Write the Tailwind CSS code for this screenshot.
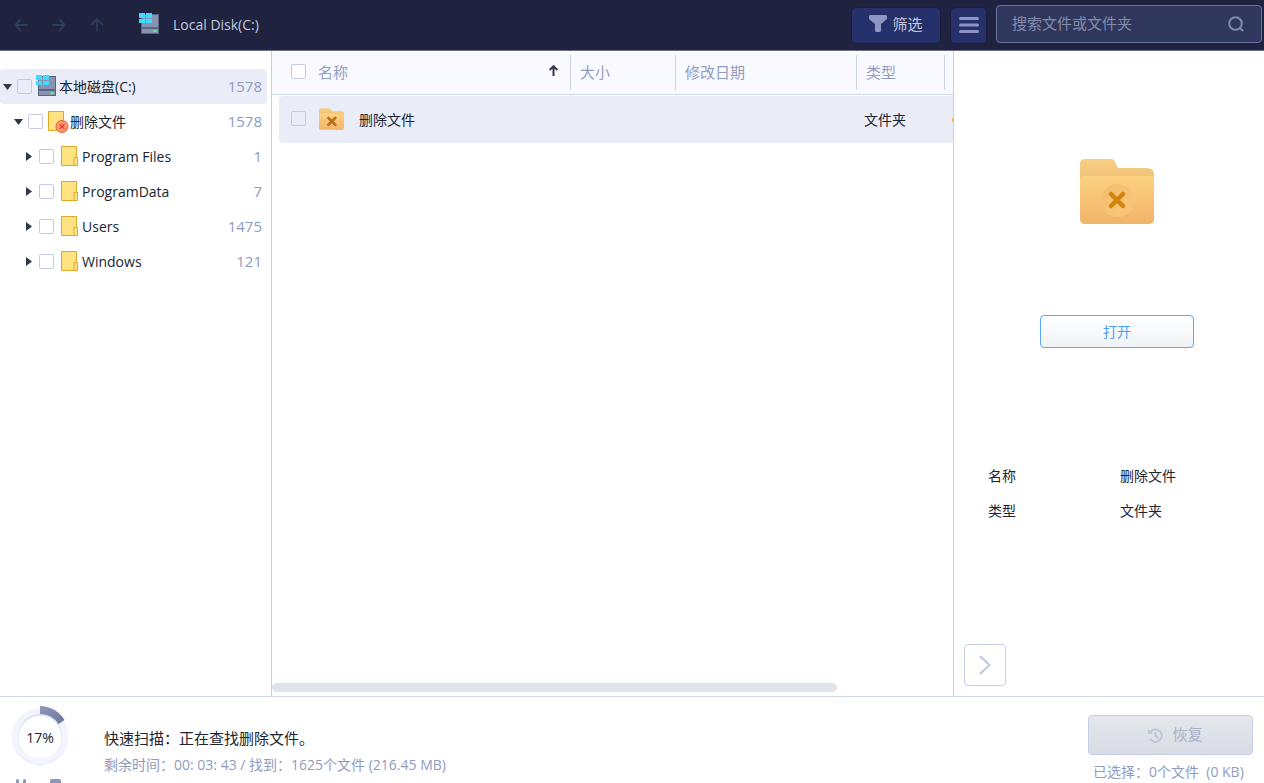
<!DOCTYPE html>
<html lang="zh-CN">
<head>
<meta charset="utf-8">
<title>Local Disk(C:)</title>
<meta name="viewport" content="width=device-width, initial-scale=1">
<script src="https://cdn.jsdelivr.net/npm/@tailwindcss/browser@4"></script>
</head>
<body class="flex h-screen flex-col overflow-hidden bg-white font-['Open_Sans','Noto_Sans_CJK_SC',sans-serif] text-sm text-[#20242f]">

<svg class="size-0 shrink-0" aria-hidden="true">
  <defs>
    <linearGradient id="back" x1="0" y1="0" x2="0" y2="1"><stop offset="0" stop-color="#f8cf85"/><stop offset="1" stop-color="#e9b66b"/></linearGradient>
    <linearGradient id="front" x1="0" y1="0" x2="0" y2="1"><stop offset="0" stop-color="#fdd182"/><stop offset="1" stop-color="#f1b36b"/></linearGradient>
    <linearGradient id="disc" x1="0" y1="0" x2="1" y2="1"><stop offset="0" stop-color="#f3bd6f"/><stop offset="1" stop-color="#fac77d"/></linearGradient>
    <linearGradient id="arc" x1="0" y1="0" x2="1" y2="1"><stop offset="0" stop-color="#8d9abd"/><stop offset="1" stop-color="#6b7794"/></linearGradient>
  </defs>
  <symbol id="disk" viewBox="0 0 21 22">
    <rect x="2.5" y="1.5" width="17" height="19" fill="#8893b3" stroke="#59647e"/>
    <path d="M3 15h16" stroke="#414b66" stroke-width="1.2"/>
    <rect x="14.5" y="17" width="3" height="2" fill="#4df58b"/>
    <path d="M0 0h6v5H0zM7 0h6v5H7zM0 6h6v4H0zM7 6h6v4H7z" fill="#3fd8ff"/>
  </symbol>
  <symbol id="folder" viewBox="0 0 17 20">
    <path d="M.5.5h15v11h1v8H.5z" fill="#ffe383"/>
    <path d="M15.500 11.500V.5H.5v19h13m2-8h-2.500v8h3.500v-8z" fill="none" stroke="#dda92b"/>
  </symbol>
</svg>

<header class="flex h-[51px] shrink-0 items-center border-b border-[#6d6d83] bg-[#1f233f] text-[#c5c9dc]">
  <nav class="flex items-center gap-6 pl-[14px]" aria-label="导航">
    <button class="text-[#2c3c5e]" aria-label="后退"><svg class="block size-[14px]" viewBox="0 0 14 14" fill="none" stroke="currentColor" stroke-width="1.8"><path d="M13.5 7H1M7 1 1 7l6 6"/></svg></button>
    <button class="text-[#2c3c5e]" aria-label="前进"><svg class="block size-[14px]" viewBox="0 0 14 14" fill="none" stroke="currentColor" stroke-width="1.8"><path d="M.5 7H13M7 1l6 6-6 6"/></svg></button>
    <button class="text-[#2c3c5e]" aria-label="上一级"><svg class="block size-[14px]" viewBox="0 0 14 14" fill="none" stroke="currentColor" stroke-width="1.8"><path d="M7 13.5V1M1 7l6-6 6 6"/></svg></button>
  </nav>
  <svg class="mb-[2px] ml-[35px] h-[22px] w-[21px]"><use href="#disk"/></svg>
  <span class="ml-[13px] flex-1">Local Disk(C:)</span>
  <button class="flex h-[35px] w-[88px] items-center justify-center gap-[5px] rounded bg-[#26306a] text-[15px] shadow-[0_0_0_1px_#1a1e3b]">
    <svg class="mb-1 h-[17px] w-[18px]" viewBox="0 0 18 17" fill="#8d95c4"><path d="M1 0h16l1 1v3l-6 5v7l-1 1H7l-1-1V9L0 4V1z"/></svg>筛选
  </button>
  <button class="ml-[11px] flex h-[35px] w-[35px] items-center justify-center rounded bg-[#26306a] shadow-[0_0_0_1px_#1a1e3b]" aria-label="菜单">
    <svg class="h-4 w-5" viewBox="0 0 20 16" stroke="#8d95c4" stroke-width="3" stroke-linecap="round"><path d="M1.5 1.5h17M1.5 8h17M1.5 14.5h17"/></svg>
  </button>
  <label class="mr-[2px] mb-[2px] ml-[10px] flex h-[38px] w-[266px] items-center rounded border border-[#6974a3] bg-[#30375c] pr-[17px] pl-[15px]">
    <input type="text" aria-label="搜索文件或文件夹" placeholder="搜索文件或文件夹" class="min-w-0 flex-1 bg-transparent text-[15px] outline-none placeholder:text-[#858daf]">
    <svg class="size-4" viewBox="0 0 16 16" fill="none" stroke="#8289ad" stroke-width="2" stroke-linecap="round"><circle cx="7.500" cy="7.500" r="6.300"/><path d="m12 12 2.500 2.500"/></svg>
  </label>
</header>

<main class="flex min-h-0 flex-1">
  <aside class="w-[272px] shrink-0 border-r border-[#c6cee2] pt-[18px]">
    <ul>
      <li class="mr-[4px] flex h-[35px] items-center rounded bg-[#eaecf8] pr-[5px]">
        <label class="flex flex-1 items-center pl-[3px]">
          <svg class="h-[6px] w-[9px]" viewBox="0 0 9 6" fill="#30384b"><path d="M0 0h9L4.500 6z"/></svg>
          <input type="checkbox" class="mb-px ml-[5px] size-[15px] appearance-none rounded-xs border border-[#c3cce4]">
          <svg class="mb-[2px] ml-1 h-[22px] w-[21px]"><use href="#disk"/></svg>
          <span class="ml-[2px]">本地磁盘(C:)</span>
        </label>
        <span class="text-[15px] text-[#8f9bbf]">1578</span>
      </li>
      <li class="mr-[4px] flex h-[35px] items-center pr-[5px]">
        <label class="flex flex-1 items-center pl-[14px]">
          <svg class="h-[6px] w-[9px]" viewBox="0 0 9 6" fill="#30384b"><path d="M0 0h9L4.500 6z"/></svg>
          <input type="checkbox" class="mb-px ml-[5px] size-[15px] appearance-none rounded-xs border border-[#c3cce4] bg-white">
          <svg class="ml-[5px] h-[22px] w-[21px]" viewBox="0 0 21 22"><path d="M.5.5h15v19H.5z" fill="#ffe383" stroke="#dda92b"/><circle cx="14" cy="15.500" r="6" fill="#ff9a77" stroke="#ee5534"/><path d="m11.500 13 5 5m0-5-5 5" stroke="#e54324" stroke-width="1.300"/></svg>
          <span class="ml-px">删除文件</span>
        </label>
        <span class="text-[15px] text-[#8f9bbf]">1578</span>
      </li>
      <li class="mr-[4px] flex h-[35px] items-center pr-[5px]">
        <label class="flex flex-1 items-center pl-[26px]">
          <svg class="h-[9px] w-[6px]" viewBox="0 0 6 9" fill="#30384b"><path d="M0 0v9l6-4.500z"/></svg>
          <input type="checkbox" class="mb-px ml-[7px] size-[15px] appearance-none rounded-xs border border-[#c3cce4] bg-white">
          <svg class="mb-[2px] ml-[7px] h-5 w-[17px]"><use href="#folder"/></svg>
          <span class="ml-1">Program Files</span>
        </label>
        <span class="text-[15px] text-[#8f9bbf]">1</span>
      </li>
      <li class="mr-[4px] flex h-[35px] items-center pr-[5px]">
        <label class="flex flex-1 items-center pl-[26px]">
          <svg class="h-[9px] w-[6px]" viewBox="0 0 6 9" fill="#30384b"><path d="M0 0v9l6-4.500z"/></svg>
          <input type="checkbox" class="mb-px ml-[7px] size-[15px] appearance-none rounded-xs border border-[#c3cce4] bg-white">
          <svg class="mb-[2px] ml-[7px] h-5 w-[17px]"><use href="#folder"/></svg>
          <span class="ml-1">ProgramData</span>
        </label>
        <span class="text-[15px] text-[#8f9bbf]">7</span>
      </li>
      <li class="mr-[4px] flex h-[35px] items-center pr-[5px]">
        <label class="flex flex-1 items-center pl-[26px]">
          <svg class="h-[9px] w-[6px]" viewBox="0 0 6 9" fill="#30384b"><path d="M0 0v9l6-4.500z"/></svg>
          <input type="checkbox" class="mb-px ml-[7px] size-[15px] appearance-none rounded-xs border border-[#c3cce4] bg-white">
          <svg class="mb-[2px] ml-[7px] h-5 w-[17px]"><use href="#folder"/></svg>
          <span class="ml-1">Users</span>
        </label>
        <span class="text-[15px] text-[#8f9bbf]">1475</span>
      </li>
      <li class="mr-[4px] flex h-[35px] items-center pr-[5px]">
        <label class="flex flex-1 items-center pl-[26px]">
          <svg class="h-[9px] w-[6px]" viewBox="0 0 6 9" fill="#30384b"><path d="M0 0v9l6-4.500z"/></svg>
          <input type="checkbox" class="mb-px ml-[7px] size-[15px] appearance-none rounded-xs border border-[#c3cce4] bg-white">
          <svg class="mb-[2px] ml-[7px] h-5 w-[17px]"><use href="#folder"/></svg>
          <span class="ml-1">Windows</span>
        </label>
        <span class="text-[15px] text-[#8f9bbf]">121</span>
      </li>
    </ul>
  </aside>

  <section class="flex min-w-0 flex-1 flex-col">
    <div class="min-h-0 flex-1 overflow-hidden">
      <table class="w-full table-fixed border-separate border-spacing-0">
        <colgroup><col><col class="w-[105px]"><col class="w-[181px]"><col class="w-[88px]"><col class="w-[8px]"></colgroup>
        <thead class="text-left text-[15px] text-[#929dc0]">
          <tr>
            <th class="border-b border-[#cfd8e9] bg-[#f9faff] py-1 font-normal">
              <div class="flex h-[35px] items-center border-r border-[#cad3e8] pr-3 pl-[19px]">
                <input type="checkbox" aria-label="全选" class="mb-[3px] size-[15px] appearance-none rounded-xs border border-[#c3cce4] bg-white">
                <span class="ml-3 flex-1">名称</span>
                <svg class="mb-1 h-[11px] w-[9px]" viewBox="0 0 9 11" fill="none" stroke="#30384b" stroke-width="2"><path d="M4.500 11V1M.7 5l3.800-3.800L8.300 5"/></svg>
              </div>
            </th>
            <th class="border-b border-[#cfd8e9] bg-[#f9faff] py-1 font-normal"><div class="flex h-[35px] items-center border-r border-[#cad3e8] pl-[9px]">大小</div></th>
            <th class="border-b border-[#cfd8e9] bg-[#f9faff] py-1 font-normal"><div class="flex h-[35px] items-center border-r border-[#cad3e8] pl-[9px]">修改日期</div></th>
            <th class="border-b border-[#cfd8e9] bg-[#f9faff] py-1 font-normal"><div class="flex h-[35px] items-center border-r border-[#cad3e8] pl-[9px]">类型</div></th>
            <th class="border-b border-[#cfd8e9] bg-[#f9faff]"></th>
          </tr>
        </thead>
        <tbody>
          <tr>
            <td class="pt-px pl-[7px]">
              <label class="flex h-[47px] items-center rounded-l bg-[#eaecf8] pl-3">
                <input type="checkbox" class="mb-[2px] size-[15px] appearance-none rounded-xs border border-[#c3cce4]">
                <svg class="mb-[2px] ml-[13px] h-[22px] w-[25px]" viewBox="0 0 74 64"><path d="M0 6q0-6 6-6h24q4 0 6 5l2 4h29q7 0 7 7v20H0z" fill="url(#back)"/><rect y="16" width="74" height="48" rx="5" fill="url(#front)"/><path d="m28 29 20 20m0-20L28 49" stroke="#bd701c" stroke-width="8" stroke-linecap="round"/></svg>
                <span class="ml-[15px]">删除文件</span>
              </label>
            </td>
            <td class="pt-px"><div class="h-[47px] bg-[#eaecf8]"></div></td>
            <td class="pt-px"><div class="h-[47px] bg-[#eaecf8]"></div></td>
            <td class="pt-px"><div class="flex h-[47px] items-center bg-[#eaecf8] pl-[7px]">文件夹</div></td>
            <td class="pt-px"><div class="flex h-[47px] items-center justify-end overflow-hidden bg-[#eaecf8]"><span class="h-1 w-px bg-[#ffab3d]"></span></div></td>
          </tr>
        </tbody>
      </table>
    </div>
    <div class="mb-1 h-[9px] w-[83%] rounded-full bg-[#dfe4ec]"></div>
  </section>

  <aside class="flex w-[311px] shrink-0 flex-col border-l border-[#c6cee2] pb-[10px]">
    <svg class="mt-[108px] ml-[126px] h-[65px] w-[74px]" viewBox="0 0 74 65"><path d="M0 5q0-5 5-5h26q3 0 4 3l3 6h29q7 0 7 7v20H0z" fill="url(#back)"/><path d="M0 60V23q0-6 6-6h68v43q0 5-5 5H5q-5 0-5-5z" fill="url(#front)"/><circle cx="37.500" cy="41.500" r="16.500" fill="url(#disc)"/><path d="m31 35 12 12m0-12L31 47" stroke="#d18509" stroke-width="4.500" stroke-linecap="round"/></svg>
    <button class="mt-[91px] ml-[86px] h-[33px] w-[154px] rounded border border-[#5ca7fb] bg-linear-to-b from-white to-[#eff3f5] text-[#4c9cf8]">打开</button>
    <dl class="mt-[110px] ml-[34px] grid grid-cols-[132px_1fr] leading-[35px]">
      <dt>名称</dt><dd>删除文件</dd>
      <dt>类型</dt><dd>文件夹</dd>
    </dl>
    <button class="mt-auto ml-[10px] flex size-[42px] items-center justify-center rounded border border-[#c6cfe6]" aria-label="收起预览">
      <svg class="h-5 w-3" viewBox="0 0 12 20" fill="none" stroke="#bdc8e0" stroke-width="2"><path d="m1 1 9.500 9L1 19"/></svg>
    </button>
  </aside>
</main>

<footer class="flex h-[87px] shrink-0 items-start overflow-hidden border-t border-[#cfd8ea]">
  <div class="ml-[11px] flex w-[93px] flex-col pt-[9px]">
    <svg class="block h-[61px] w-[58px]" viewBox="0 0 58 61" role="img" aria-label="17%">
      <circle cx="29" cy="31" r="28" fill="#dfe7f8"/><circle cx="29" cy="30" r="28" fill="#f3f5fd"/>
      <circle cx="29" cy="30" r="22" fill="#d3ddf4"/><circle cx="29" cy="31" r="21.500" fill="#fff"/>
      <path d="M29 0a29 29 0 0 1 24.500 14l-6 4A22 22 0 0 0 29 8z" fill="url(#arc)"/>
      <text x="29" y="37" text-anchor="middle" font-size="14" fill="#20242f">17%</text>
    </svg>
    <div class="mt-3 flex gap-6 pl-[5px]">
      <button class="flex gap-1" aria-label="暂停"><span class="h-3 w-[3px] rounded-t-xs bg-[#8b98ba]"></span><span class="h-3 w-[3px] rounded-t-xs bg-[#8b98ba]"></span></button>
      <button class="size-[11px] rounded-xs bg-[#8b98ba]" aria-label="停止"></button>
    </div>
  </div>
  <div class="flex-1 pt-[29px]">
    <p class="text-[15px] leading-6">快速扫描：正在查找删除文件。</p>
    <p class="mt-[3px] leading-6 text-[#8f9bbf]">剩余时间：00: 03: 43 / 找到：1625个文件 (216.45 MB)</p>
  </div>
  <div class="mr-[11px] w-[165px] pt-[18px]">
    <button disabled class="flex h-10 w-full items-center justify-center gap-[9px] rounded border border-[#c6cfe6] bg-linear-to-b from-[#e5e7ec] to-[#d9dce5] pl-[10px] text-[15px] text-[#a7b0c7]">
      <svg class="size-[15px]" viewBox="0 0 15 15" fill="none" stroke="#bdc6da" stroke-width="2"><path d="M2.200 4.500A6.200 6.200 0 1 1 2 10.500M7.500 4v4l3 2"/><path d="M0 1v5h5z" fill="#bdc6da" stroke="none"/></svg>恢复
    </button>
    <p class="mt-[5px] pl-[5px] leading-6 whitespace-nowrap text-[#8f9bbf]">已选择：0个文件&nbsp; (0 KB)</p>
  </div>
</footer>
</body>
</html>
